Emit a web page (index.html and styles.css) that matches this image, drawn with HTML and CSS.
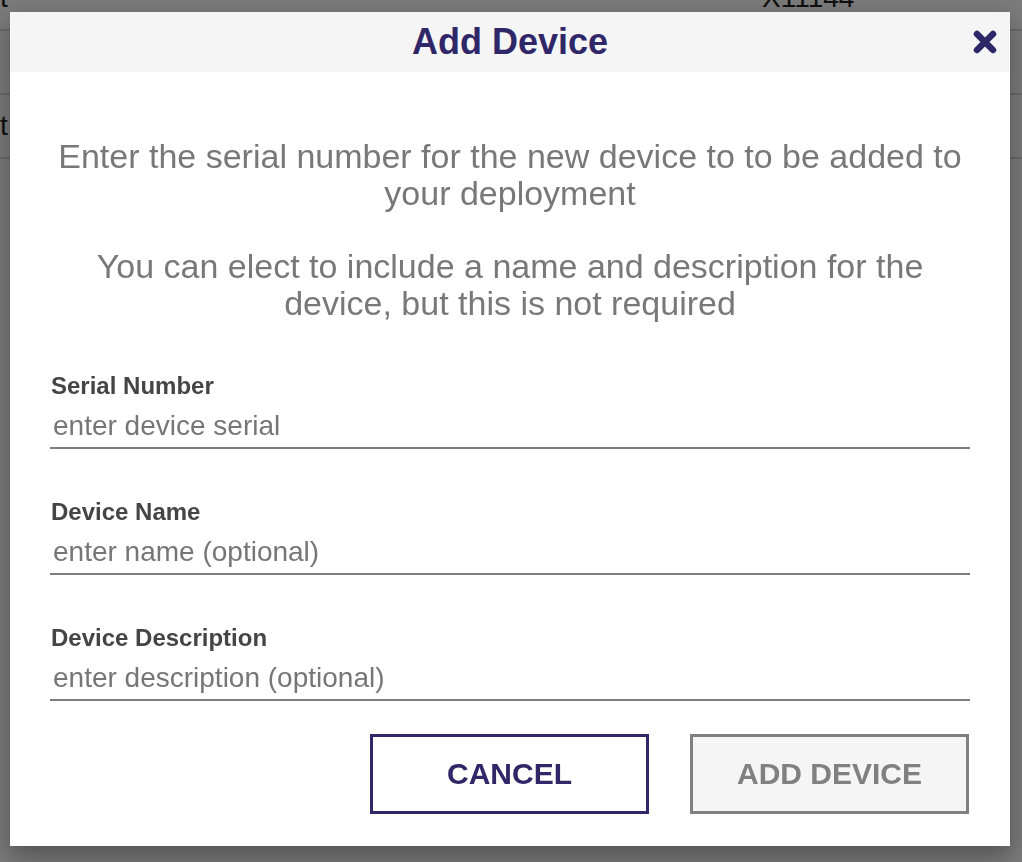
FILE: index.html
```html
<!DOCTYPE html>
<html lang="en">
<head>
<meta charset="utf-8">
<title>Add Device</title>
<link rel="stylesheet" href="styles.css">
</head>
<body>
<div class="page">
  <div class="row"><span class="cell-left">t</span><span class="cell-serial">X11144</span></div>
  <div class="row"><span class="cell-left"></span><span class="cell-serial"></span></div>
  <div class="row"><span class="cell-left">t</span><span class="cell-serial"></span></div>
</div>
<div class="overlay">
  <div class="modal">
    <div class="modal-header">
      <h2 class="modal-title">Add Device</h2>
      <button class="close-btn" aria-label="Close">
        <svg width="26" height="26" viewBox="0 0 26 26"><path d="M5 5 L21 21 M21 5 L5 21" stroke="#2f2768" stroke-width="6.5" stroke-linecap="round" fill="none"/></svg>
      </button>
    </div>
    <div class="modal-body">
      <p class="intro">Enter the serial number for the new device to to be added to your deployment</p>
      <p class="intro">You can elect to include a name and description for the device, but this is not required</p>
      <div class="field">
        <label class="field-label">Serial Number</label>
        <input class="field-input" type="text" placeholder="enter device serial">
      </div>
      <div class="field">
        <label class="field-label">Device Name</label>
        <input class="field-input" type="text" placeholder="enter name (optional)">
      </div>
      <div class="field">
        <label class="field-label">Device Description</label>
        <input class="field-input" type="text" placeholder="enter description (optional)">
      </div>
      <div class="actions">
        <button class="btn btn-cancel">CANCEL</button>
        <button class="btn btn-add">ADD DEVICE</button>
      </div>
    </div>
  </div>
</div>
</body>
</html>
```
FILE: styles.css
```css
* { box-sizing: border-box; }
html, body { margin: 0; padding: 0; }
body {
  font-family: "Liberation Sans", Arial, sans-serif;
  background: #fff;
  width: 1022px;
  height: 862px;
  overflow: hidden;
}
.page {
  margin-top: -33px;
}
.row {
  height: 64px;
  border-bottom: 2px solid #dcdcdc;
  display: flex;
  align-items: center;
  font-size: 28px;
  color: #222;
}
.cell-left { width: 762px; }

.overlay {
  position: fixed;
  inset: 0;
  background: rgba(0, 0, 0, 0.52);
  padding: 12px 0 0 10px;
  display: flex;
  align-items: flex-start;
}
.modal {
  width: 1000px;
  background: #fff;
  box-shadow: 0 10px 24px rgba(0, 0, 0, 0.35);
}
.modal-header {
  height: 60px;
  background: #f5f5f5;
  display: grid;
  grid-template-columns: 1fr auto 1fr;
  align-items: center;
}
.modal-title {
  grid-column: 2;
  margin: 0;
  font-size: 36px;
  font-weight: bold;
  color: #2f2768;
  line-height: 60px;
}
.close-btn {
  grid-column: 3;
  justify-self: end;
  margin-right: 12px;
  padding: 0;
  border: 0;
  background: transparent;
  width: 26px;
  height: 26px;
  display: flex;
}
.modal-body {
  padding: 66px 40px 32px;
}
.intro {
  margin: 0 0 36px;
  text-align: center;
  font-size: 34px;
  line-height: 37px;
  color: #787878;
}
.intro + .intro { margin-bottom: 0; }
.field {
  display: flex;
  flex-direction: column;
  margin-top: 50px;
}
.field + .field { margin-top: 49px; }
.field-label {
  font-size: 24px;
  line-height: 28px;
  font-weight: bold;
  color: #454545;
  padding-left: 1px;
}
.field-input {
  height: 49px;
  padding: 5px 3px 0;
  border: 0;
  border-bottom: 2px solid #7d7d7d;
  font-family: "Liberation Sans", Arial, sans-serif;
  font-size: 28px;
  color: #444;
  background: transparent;
  outline: none;
  width: 100%;
}
.field-input::placeholder { color: #767676; opacity: 1; }
.actions {
  display: flex;
  justify-content: flex-end;
  gap: 41px;
  margin-top: 33px;
  padding-right: 1px;
}
.btn {
  width: 279px;
  height: 80px;
  font-family: "Liberation Sans", Arial, sans-serif;
  font-size: 30px;
  font-weight: bold;
  border-width: 3px;
  border-style: solid;
}
.btn-cancel {
  background: #fff;
  border-color: #2f2768;
  color: #2f2768;
}
.btn-add {
  background: #f5f5f5;
  border-color: #808080;
  color: #808080;
}
```
